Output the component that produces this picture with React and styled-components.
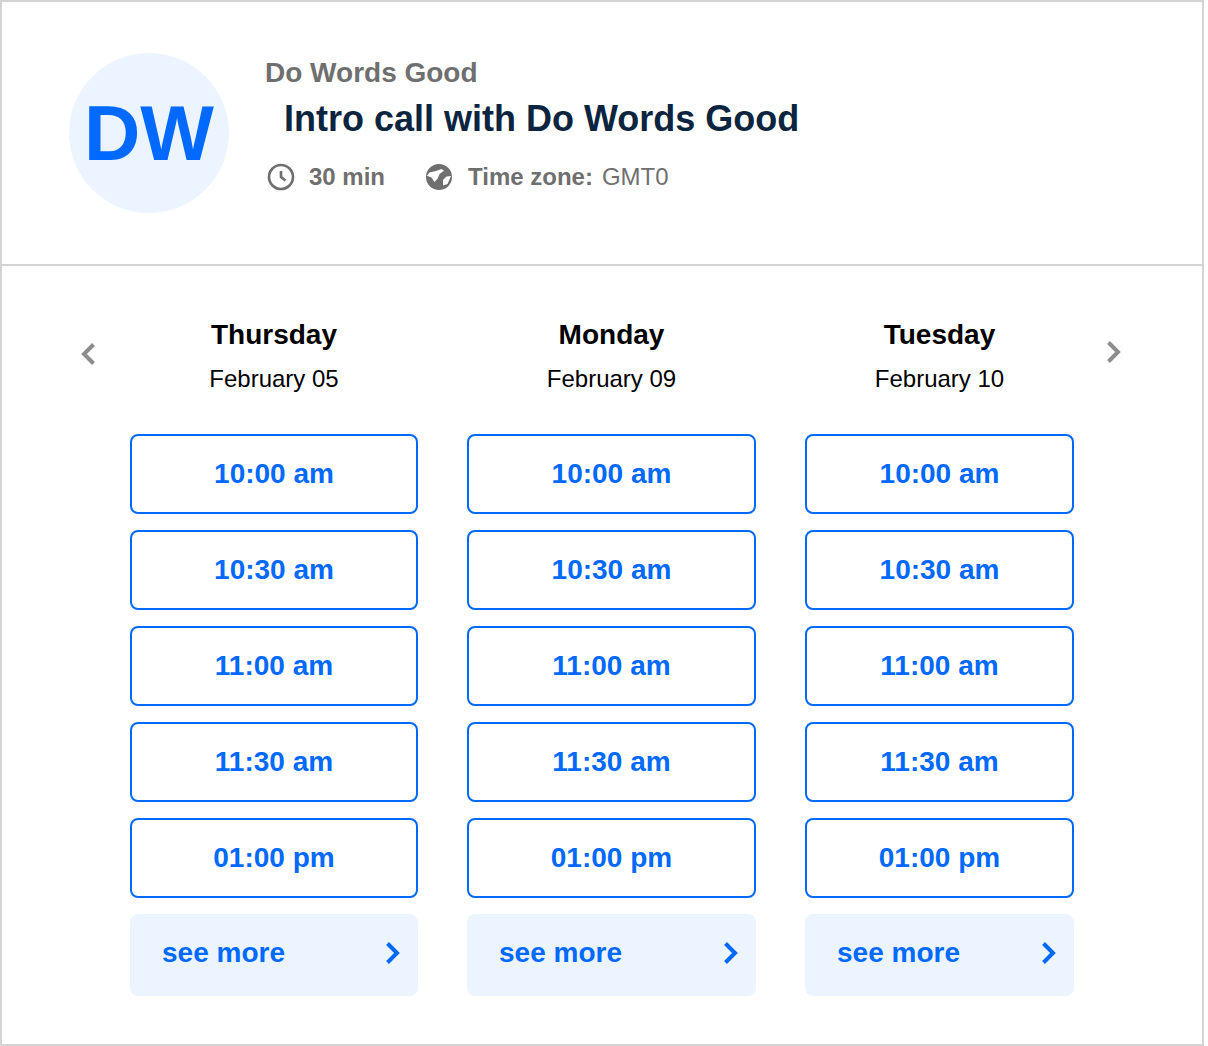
import React from "react";
import styled, { createGlobalStyle } from "styled-components";

const fontStack = `"Liberation Sans", Arial, sans-serif`;

const GlobalStyle = createGlobalStyle`
  html, body {
    margin: 0;
    padding: 0;
    background: #fff;
    font-family: ${fontStack};
  }
  * { box-sizing: border-box; }
`;

const Card = styled.div`
  width: 1204px;
  height: 1046px;
  border: 2px solid #d4d4d4;
  background: #fff;
`;

const Header = styled.header`
  display: flex;
  height: 264px;
  padding: 51px 0 0 67px;
  border-bottom: 2px solid #d4d4d4;
`;

const Avatar = styled.div`
  width: 160px;
  height: 160px;
  border-radius: 50%;
  background: #ecf4ff;
  color: #0069ff;
  display: flex;
  align-items: center;
  justify-content: center;
  font-size: 78px;
  font-weight: 700;
`;

const Info = styled.div`
  margin-left: 36px;
`;

const Org = styled.div`
  font-size: 28px;
  line-height: 40px;
  font-weight: 700;
  color: #6f6f6f;
`;

const Title = styled.h1`
  margin: 0 0 0 19px;
  font-size: 36px;
  line-height: 52px;
  font-weight: 700;
  color: #0b2540;
`;

const Meta = styled.div`
  display: flex;
  align-items: center;
  margin: 14px 0 0 2px;
  font-size: 24px;
  line-height: 36px;
  color: #6f6f6f;
`;

const MetaItem = styled.span`
  display: flex;
  align-items: center;
  margin-right: 40px;
  font-weight: 700;
`;

const MetaIcon = styled.span`
  display: flex;
  justify-content: center;
  width: 28px;
  margin-right: ${(p) => p.$gap}px;
`;

const Zone = styled.span`
  font-weight: 400;
  margin-left: 9px;
`;

const Body = styled.main`
  position: relative;
  display: flex;
  padding: 51px 0 0 128px;
  gap: 49px;
`;

const Column = styled.section`
  width: ${(p) => p.$width}px;
  display: flex;
  flex-direction: column;
`;

const Day = styled.div`
  text-align: center;
  font-size: 28px;
  line-height: 36px;
  font-weight: 700;
  color: #000;
`;

const DateLabel = styled.div`
  text-align: center;
  font-size: 24px;
  line-height: 36px;
  margin: 8px 0 37px;
  color: #000;
`;

const Slot = styled.button`
  height: 80px;
  margin-bottom: 16px;
  padding: 0;
  border: 2px solid #0069ff;
  border-radius: 8px;
  background: #fff;
  color: #0069ff;
  font: 700 28px ${fontStack};
`;

const More = styled.button`
  height: 82px;
  display: flex;
  align-items: center;
  justify-content: space-between;
  padding: 0 18px 4px 32px;
  border: 0;
  border-radius: 8px;
  background: #ecf4ff;
  color: #0069ff;
  font: 700 28px ${fontStack};
`;

const Arrow = styled.span`
  position: absolute;
  top: ${(p) => p.$top}px;
  left: ${(p) => p.$left}px;
  display: flex;
`;

const Chevron = ({ left, color }) => (
  <svg width="14" height="22" viewBox="0 0 14 22" fill="none" stroke={color} strokeWidth="4">
    <path d={left ? "M12.5 1.5 L3 11 L12.5 20.5" : "M1.5 1.5 L11 11 L1.5 20.5"} />
  </svg>
);

const ClockIcon = () => (
  <svg width="28" height="28" viewBox="0 0 28 28" fill="none" stroke="#6f6f6f" strokeWidth="2.6">
    <circle cx="14" cy="14" r="12" />
    <path d="M14 8 V14 L18.5 17.5" />
  </svg>
);

const GlobeIcon = () => (
  <svg width="26" height="26" viewBox="0 0 26 26">
    <circle cx="13" cy="13" r="13" fill="#6f6f6f" />
    <path
      d="M1 11.7 L3.5 8.5 L10 7 L15.5 5 L18 6.7 L13.5 10 L11.7 14.5 L8.5 18 L5.5 13.5 Z"
      fill="#fff"
    />
    <path d="M25 12 L20.5 12.5 L17 16 L17 21.5 L21.5 20 Z" fill="#fff" />
  </svg>
);

const columns = [
  { day: "Thursday", date: "February 05", width: 288 },
  { day: "Monday", date: "February 09", width: 289 },
  { day: "Tuesday", date: "February 10", width: 269 },
];

const times = ["10:00 am", "10:30 am", "11:00 am", "11:30 am", "01:00 pm"];

export default function App() {
  return (
    <>
      <GlobalStyle />
      <Card>
        <Header>
          <Avatar>DW</Avatar>
          <Info>
            <Org>Do Words Good</Org>
            <Title>Intro call with Do Words Good</Title>
            <Meta>
              <MetaItem>
                <MetaIcon $gap={14}>
                  <ClockIcon />
                </MetaIcon>
                30 min
              </MetaItem>
              <MetaItem>
                <MetaIcon $gap={15}>
                  <GlobeIcon />
                </MetaIcon>
                Time zone:
                <Zone>GMT0</Zone>
              </MetaItem>
            </Meta>
          </Info>
        </Header>
        <Body>
          <Arrow $top={77} $left={79}>
            <Chevron left color="#8c8c8c" />
          </Arrow>
          {columns.map((col) => (
            <Column key={col.day} $width={col.width}>
              <Day>{col.day}</Day>
              <DateLabel>{col.date}</DateLabel>
              {times.map((t) => (
                <Slot key={t}>{t}</Slot>
              ))}
              <More>
                see more
                <Chevron color="#0069ff" />
              </More>
            </Column>
          ))}
          <Arrow $top={75} $left={1105}>
            <Chevron color="#8c8c8c" />
          </Arrow>
        </Body>
      </Card>
    </>
  );
}
